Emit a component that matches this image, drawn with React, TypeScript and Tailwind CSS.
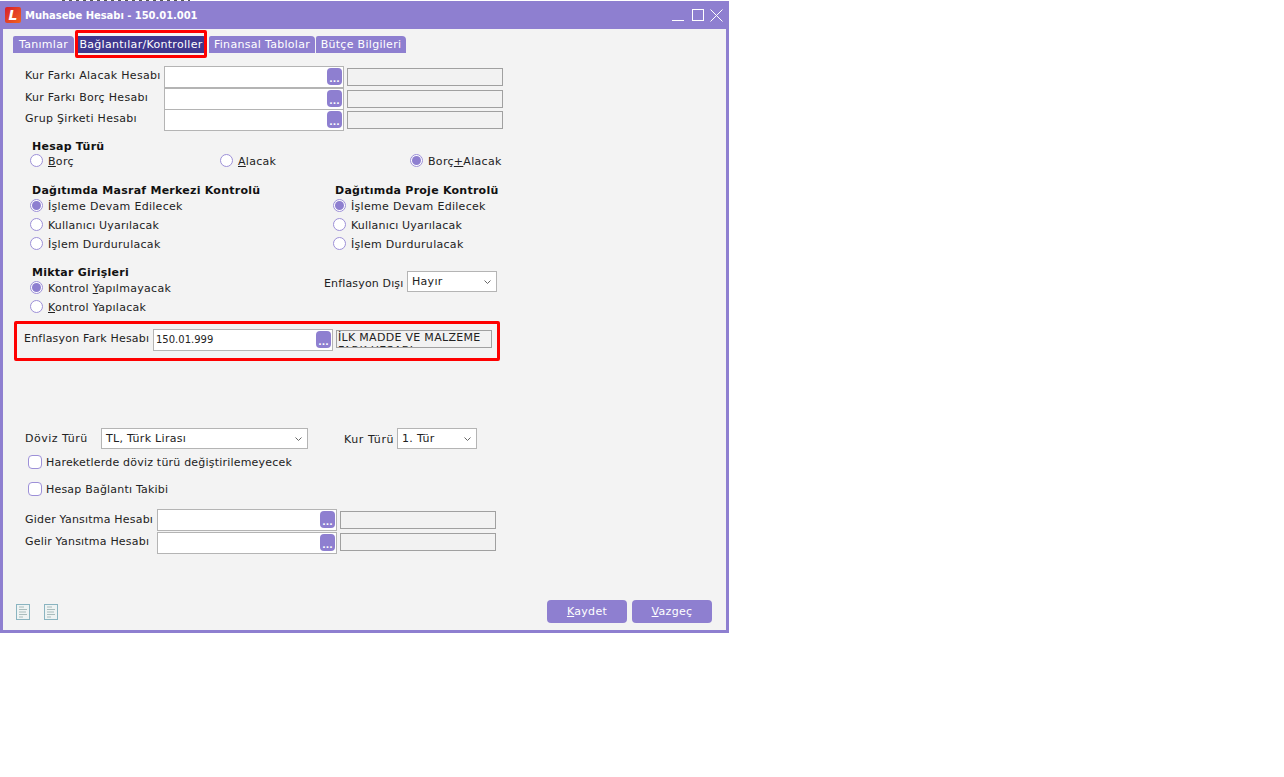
const FONT = "font-['DejaVu_Sans',Verdana,sans-serif]";

function Radio({ checked = false, label }: { checked?: boolean; label: React.ReactNode }) {
  return (
    <div className="flex items-center h-[19px]">
      <span className="w-[13px] h-[13px] rounded-full border border-[#9d90d8] bg-white flex items-center justify-center shrink-0">
        {checked && <span className="w-[9px] h-[9px] rounded-full bg-[#8e7fd0]" />}
      </span>
      <span className="ml-[5px] pt-[4px] text-[#222]">{label}</span>
    </div>
  );
}

function Heading({ children, pull = "-mb-[2px]" }: { children: React.ReactNode; pull?: string }) {
  return <div className={`${pull} ml-[2px] font-bold tracking-[0.25px] text-[#111] leading-[14px]`}>{children}</div>;
}

function Check({ label }: { label: string }) {
  return (
    <div className="flex items-center h-[14px] ml-[28px]">
      <span className="w-[14px] h-[14px] rounded-[4px] border border-[#9d90d8] bg-white shrink-0" />
      <span className="ml-[4px] pt-[2px] tracking-[0.2px] text-[#222]">{label}</span>
    </div>
  );
}

function Dots() {
  return (
    <span className="absolute right-[1px] top-[1px] w-[15px] h-[17px] rounded-[4px] bg-[#8e7fd0] text-white text-[9px] font-bold tracking-normal flex items-end justify-center pb-[2px] leading-[8px]">
      ...
    </span>
  );
}

function Lookup({ value }: { value?: string }) {
  return (
    <div className="relative shrink-0 w-[180px] h-[22px] border border-[#b4b4b4] bg-white pl-[2px] leading-[20px] text-[10px] tracking-normal text-[#222]">
      {value}
      <Dots />
    </div>
  );
}

function GreyBox({ children }: { children?: React.ReactNode }) {
  return (
    <div className="w-[156px] h-[18px] border border-[#a0a0a0] bg-[#f2f2f2] overflow-hidden leading-[13px] px-[1px] text-[#222]">
      {children}
    </div>
  );
}

function AccountRow({ label, height }: { label: string; height: string }) {
  return (
    <div className={`flex items-start ${height}`}>
      <span className="w-[139px] leading-[20px] text-[#222]">{label}</span>
      <Lookup />
      <div className="ml-[3px] mt-[2px]">
        <GreyBox />
      </div>
    </div>
  );
}

function Select({ value, width }: { value: string; width: string }) {
  return (
    <div className={`${width} h-[21px] border border-[#b4b4b4] bg-white flex items-center justify-between pl-[4px] pr-[5px] text-[#222]`}>
      <span className="leading-[17px] -mt-[1px]">{value}</span>
      <svg width="7" height="4" viewBox="0 0 7 4" fill="none" stroke="#666" strokeWidth="1">
        <path d="M0.500 0.500 L3.500 3.500 L6.500 0.500" />
      </svg>
    </div>
  );
}

function Tab({ label, width, active = false }: { label: string; width: string; active?: boolean }) {
  return (
    <div
      className={`${width} h-[17px] pt-[1px] rounded-tr-[4px] rounded-tl-[2px] flex items-center justify-center text-white ${active ? "bg-[#40388f]" : "bg-[#8e7fd0]"}`}
    >
      {label}
    </div>
  );
}

function DocIcon() {
  return (
    <svg width="15" height="17" viewBox="0 0 15 17" fill="none">
      <rect x="0.500" y="0.500" width="13" height="15" fill="#eef3f3" stroke="#8ab4c0" />
      <path d="M3 3H8M3 5.500H11M3 8H10M3 10.500H11M3 13H7" stroke="#a9bcbc" strokeWidth="1" />
    </svg>
  );
}

function Button({ hot, rest }: { hot: string; rest: string }) {
  return (
    <div className="w-[80px] h-[23px] pt-[2px] rounded-[4px] bg-[#8e7fd0] text-white flex items-center justify-center">
      <span>
        <span className="underline">{hot}</span>
        {rest}
      </span>
    </div>
  );
}

export default function App() {
  return (
    <div className={`${FONT} text-[11px] tracking-[0.3px] w-[1284px] h-[777px] bg-white overflow-hidden`}>
      {/* Sliver of the window behind */}
      <div className="h-px flex">
        <div className="ml-[62px] w-[128px] h-px bg-[repeating-linear-gradient(90deg,#555_0_3px,#fff_3px_7px)]" />
      </div>

      <div className="w-[729px] h-[632px] border-x-[3px] border-b-[3px] border-[#8e7fd0] bg-[#f3f3f3] flex flex-col">
        {/* Title bar */}
        <div className="h-[28px] -mx-[3px] bg-[#8e7fd0] flex items-center pl-[5px] pr-[6px] shrink-0">
          <div className="w-[16px] h-[16px] rounded-[2px] bg-[linear-gradient(135deg,#d81e2c,#f0641e)] flex items-center justify-center text-white font-bold italic text-[14px] leading-none">
            L
          </div>
          <span className="ml-[4px] pt-[1px] text-[10px] tracking-[-0.05px] text-white font-bold">Muhasebe Hesabı - 150.01.001</span>
          <div className="ml-auto flex items-center">
            <svg width="12" height="12" viewBox="0 0 12 12" stroke="#fff" fill="none">
              <path d="M0 11.500H12" />
            </svg>
            <svg className="ml-[8px]" width="12" height="12" viewBox="0 0 12 12" stroke="#fff" fill="none">
              <rect x="0.500" y="0.500" width="11" height="11" />
            </svg>
            <svg className="ml-[6px]" width="13" height="13" viewBox="0 0 13 13" stroke="#fff" fill="none">
              <path d="M0.500 0.500L12.500 12.500M12.500 0.500L0.500 12.500" />
            </svg>
          </div>
        </div>

        <div className="flex-1 flex flex-col">
          {/* Tabs */}
          <div className="relative flex items-start mt-[7px] ml-[10px] h-[17px] gap-[1px]">
            <Tab label="Tanımlar" width="w-[61px]" />
            <div className="relative">
              <Tab label="Bağlantılar/Kontroller" width="w-[132px]" active />
              <div className="absolute left-0 right-0 -top-[6px] -bottom-[5px] border-[3px] border-[#fe0000] rounded-[2px]" />
            </div>
            <div className="w-0" />
            <Tab label="Finansal Tablolar" width="w-[106px]" />
            <Tab label="Bütçe Bilgileri" width="w-[90px]" />
          </div>

          <div className="mt-[13px] ml-[22px] flex flex-col">
            <AccountRow label="Kur Farkı Alacak Hesabı" height="h-[22px]" />
            <AccountRow label="Kur Farkı Borç Hesabı" height="h-[21px]" />
            <AccountRow label="Grup Şirketi Hesabı" height="h-[21px]" />
          </div>

          {/* Hesap Türü */}
          <div className="mt-[10px] ml-[27px]">
            <Heading pull="-mb-[3px]">Hesap Türü</Heading>
            <div className="flex">
              <div className="w-[190px]">
                <Radio label={<><u>B</u>orç</>} />
              </div>
              <div className="w-[190px]">
                <Radio label={<><u>A</u>lacak</>} />
              </div>
              <Radio checked label={<>Borç<u>+</u>Alacak</>} />
            </div>
          </div>

          {/* Kontrol sections */}
          <div className="mt-[14px] ml-[27px] flex">
            <div className="w-[303px]">
              <Heading>Dağıtımda Masraf Merkezi Kontrolü</Heading>
              <Radio checked label="İşleme Devam Edilecek" />
              <Radio label={<span className="tracking-[0.2px]">Kullanıcı Uyarılacak</span>} />
              <Radio label="İşlem Durdurulacak" />
            </div>
            <div>
              <Heading>Dağıtımda Proje Kontrolü</Heading>
              <Radio checked label="İşleme Devam Edilecek" />
              <Radio label={<span className="tracking-[0.2px]">Kullanıcı Uyarılacak</span>} />
              <Radio label="İşlem Durdurulacak" />
            </div>
          </div>

          {/* Miktar */}
          <div className="mt-[13px] ml-[27px] flex">
            <div className="w-[294px]">
              <Heading>Miktar Girişleri</Heading>
              <Radio checked label={<>Kontrol <u>Y</u>apılmayacak</>} />
              <Radio label={<><u>K</u>ontrol Yapılacak</>} />
            </div>
            <div className="flex items-start mt-[5px]">
              <span className="w-[83px] leading-[26px] tracking-[0.15px] text-[#222] whitespace-nowrap">Enflasyon Dışı</span>
              <Select value="Hayır" width="w-[90px]" />
            </div>
          </div>

          {/* Enflasyon */}
          <div className="mt-[5px] ml-[11px] w-[486px] h-[40px] border-[3px] border-[#fe0000] rounded-[2px] pl-[7px] pt-[5px] flex items-start">
            <span className="w-[129px] leading-[20px] tracking-[0.2px] text-[#222] whitespace-nowrap">Enflasyon Fark Hesabı</span>
            <Lookup value="150.01.999" />
            <div className="ml-[3px] mt-[1px]">
              <GreyBox>İLK MADDE VE MALZEME FARK HESABI</GreyBox>
            </div>
          </div>

          {/* Döviz */}
          <div className="mt-[67px] ml-[22px] h-[21px] flex items-start">
            <span className="w-[76px] leading-[22px] tracking-[0.5px] text-[#222]">Döviz Türü</span>
            <Select value="TL, Türk Lirası" width="w-[207px]" />
            <span className="ml-[36px] w-[53px] leading-[24px] tracking-[0.6px] text-[#222] whitespace-nowrap">Kur Türü</span>
            <Select value="1. Tür" width="w-[80px]" />
          </div>
          <div className="mt-[6px] -ml-[3px]">
            <Check label="Hareketlerde döviz türü değiştirilemeyecek" />
          </div>
          <div className="mt-[13px] -ml-[3px]">
            <Check label="Hesap Bağlantı Takibi" />
          </div>

          <div className="mt-[13px] ml-[22px] flex flex-col gap-[1px]">
            <div className="flex items-start h-[22px]">
              <span className="w-[132px] leading-[22px] tracking-[0.2px] text-[#222] whitespace-nowrap">Gider Yansıtma Hesabı</span>
              <Lookup />
              <div className="ml-[3px] mt-[2px]">
                <GreyBox />
              </div>
            </div>
            <div className="flex items-start h-[22px]">
              <span className="w-[132px] leading-[20px] tracking-[0.2px] text-[#222] whitespace-nowrap">Gelir Yansıtma Hesabı</span>
              <Lookup />
              <div className="ml-[3px] mt-[1px]">
                <GreyBox />
              </div>
            </div>
          </div>

          {/* Footer */}
          <div className="mt-auto mb-[7px] ml-[13px] mr-[14px] flex items-end justify-between">
            <div className="flex gap-[13px] mb-[2px]">
              <DocIcon />
              <DocIcon />
            </div>
            <div className="flex gap-[5px]">
              <Button hot="K" rest="aydet" />
              <Button hot="V" rest="azgeç" />
            </div>
          </div>
        </div>
      </div>
    </div>
  );
}
